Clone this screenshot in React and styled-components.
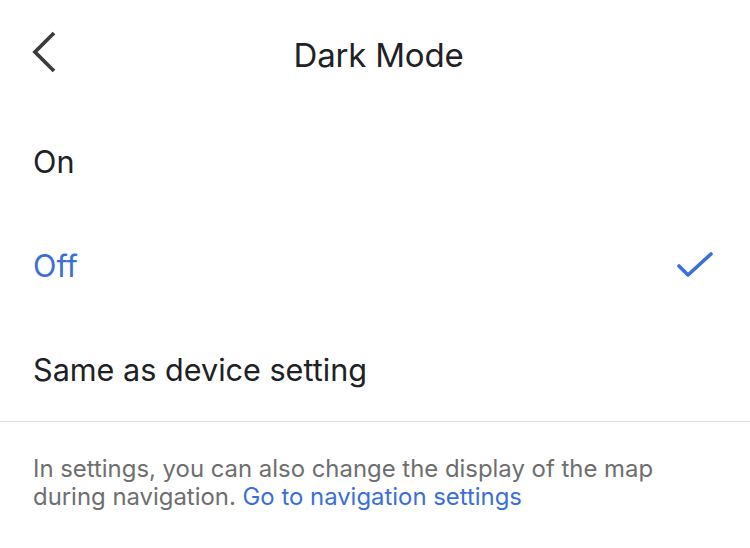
import styled, { createGlobalStyle } from 'styled-components'

const GlobalStyle = createGlobalStyle`
  html, body {
    margin: 0;
    padding: 0;
    background: #ffffff;
  }
  body {
    font-family: Inter, Roboto, 'Liberation Sans', sans-serif;
    -webkit-font-smoothing: antialiased;
  }
`

const Screen = styled.div`
  width: 750px;
  height: 548px;
  background: #ffffff;
  overflow: hidden;
`

const Header = styled.div`
  height: 109px;
  display: grid;
  grid-template-columns: 104px 1fr 104px;
  align-items: center;
`

const BackButton = styled.button`
  border: 0;
  background: none;
  padding: 0 0 5px 31px;
  height: 100%;
  display: flex;
  align-items: center;
  cursor: pointer;
`

const Title = styled.h1`
  margin: 0 0 0 7px;
  text-align: center;
  font-size: 33px;
  font-weight: 400;
  color: #202124;
  letter-spacing: -0.2px;
`

const List = styled.ul`
  list-style: none;
  margin: 0;
  padding: 0;
  border-bottom: 1px solid #dcdcdc;
`

const Option = styled.li`
  height: 104px;
  display: flex;
  align-items: center;
  justify-content: space-between;
  padding: 0 36px 0 33px;
  font-size: 30.6px;
  color: ${(p) => (p.selected ? '#3a6fd8' : '#202124')};
`

const Footer = styled.p`
  margin: 0;
  padding: 33px 50px 0 33px;
  font-size: 23.9px;
  line-height: 28px;
  color: #6e6e6e;
`

const Link = styled.a`
  color: #3a6fd8;
  text-decoration: none;
`

const Chevron = () => (
  <svg width="26" height="44" viewBox="0 0 26 44">
    <path d="M23 3 L4 22 L23 41" fill="none" stroke="#3c3c3c" strokeWidth="3.8" strokeLinecap="butt" />
  </svg>
)

const Check = () => (
  <svg width="38" height="28" viewBox="0 0 38 28">
    <path d="M3 15 L12 24 L35 3" fill="none" stroke="#3a6fd8" strokeWidth="3.6" strokeLinecap="round" strokeLinejoin="round" />
  </svg>
)

const options = [
  { label: 'On' },
  { label: 'Off', selected: true },
  { label: 'Same as device setting' },
]

export default function App() {
  return (
    <Screen>
      <GlobalStyle />
      <Header>
        <BackButton aria-label="Back">
          <Chevron />
        </BackButton>
        <Title>Dark Mode</Title>
        <div />
      </Header>
      <List>
        {options.map((o) => (
          <Option key={o.label} selected={o.selected}>
            <span>{o.label}</span>
            {o.selected && <Check />}
          </Option>
        ))}
      </List>
      <Footer>
        In settings, you can also change the display of the map during navigation.{' '}
        <Link href="#">Go to navigation settings</Link>
      </Footer>
    </Screen>
  )
}
